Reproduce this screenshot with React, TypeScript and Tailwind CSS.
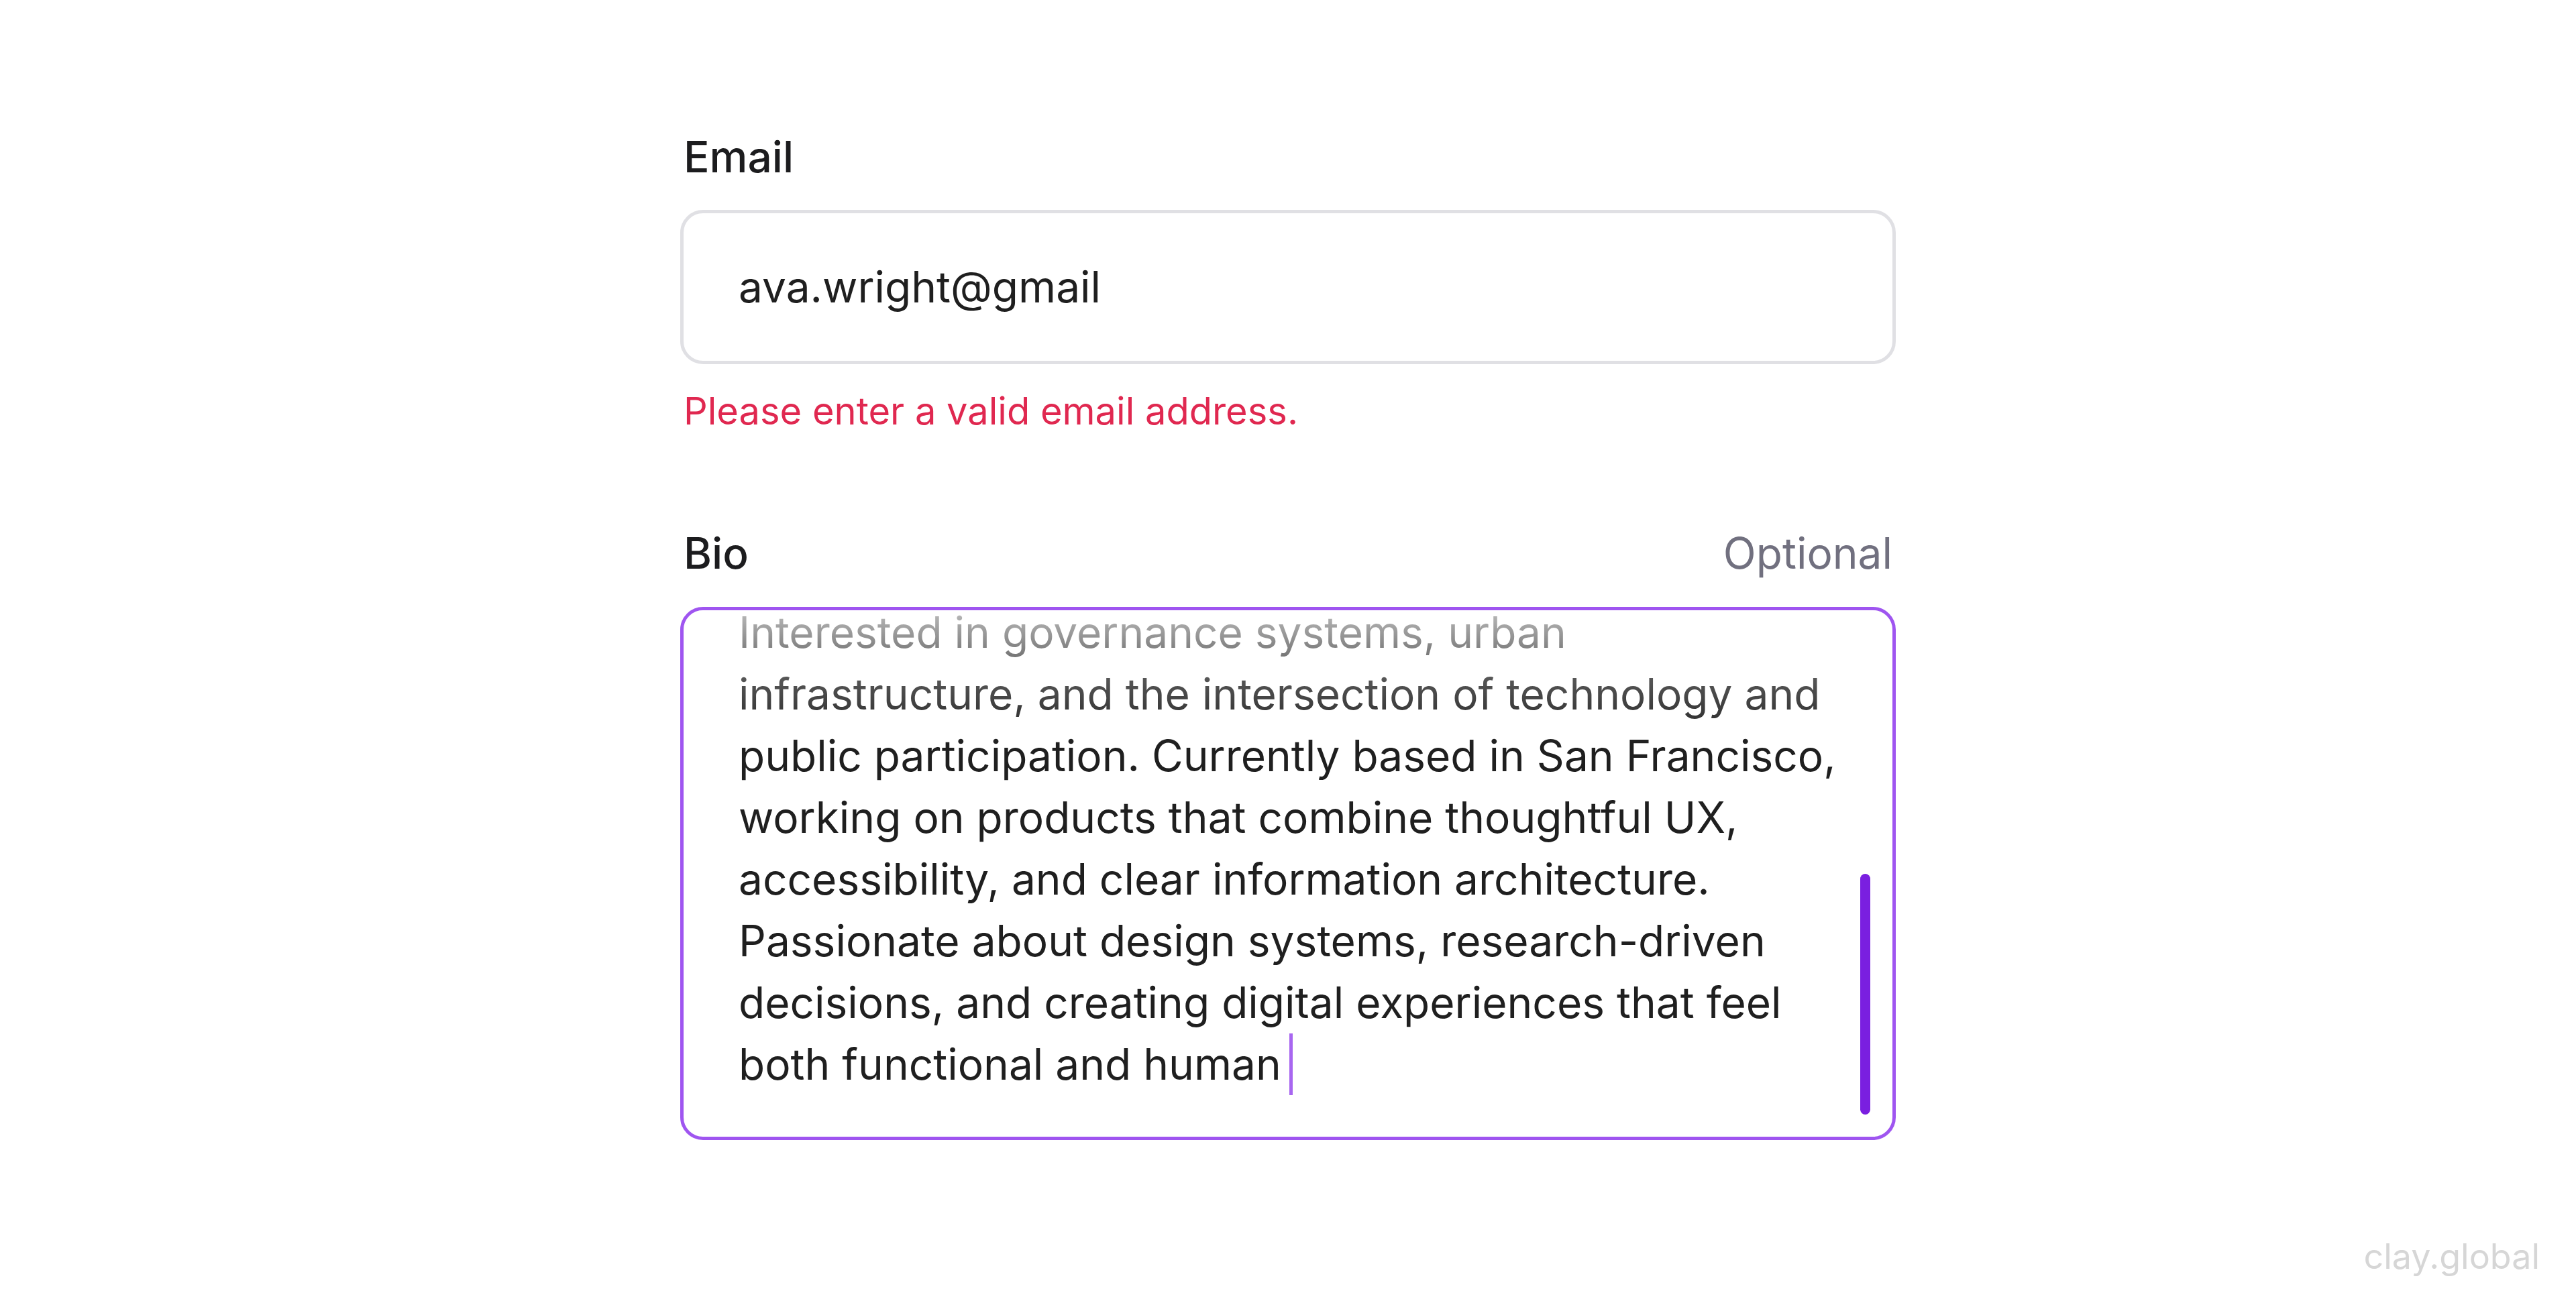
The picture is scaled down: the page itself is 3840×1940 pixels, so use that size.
import React from "react";

const lines = [
  "Interested in governance systems, urban",
  "infrastructure, and the intersection of technology and",
  "public participation. Currently based in San Francisco,",
  "working on products that combine thoughtful UX,",
  "accessibility, and clear information architecture.",
  "Passionate about design systems, research-driven",
  "decisions, and creating digital experiences that feel",
];

export default function App() {
  return (
    <div
      className="relative w-full h-[1940px] bg-white overflow-hidden"
      style={{ fontFamily: "Inter, 'Noto Sans', sans-serif" }}
    >
      <div className="mx-auto w-[1812px] pt-[202px] flex flex-col">
        {/* Email */}
        <label className="pl-[5px] text-[64px] leading-[64px] font-medium text-[#1c1c1e]">Email</label>
        <div className="mt-[47px] h-[230px] rounded-[34px] border-[5px] border-[#e0e0e4] bg-white flex items-center pl-[82px]">
          <span className="text-[64px] leading-[64px] text-[#1f1f1f]">ava.wright@gmail</span>
        </div>
        <p className="mt-[42px] pl-[5px] text-[56px] leading-[56px] text-[#e02850]">
          Please enter a valid email address.
        </p>

        {/* Bio */}
        <div className="mt-[152px] flex items-baseline justify-between pl-[5px] pr-[5px]">
          <label className="text-[64px] leading-[64px] font-medium text-[#1c1c1e]">Bio</label>
          <span className="text-[64px] leading-[64px] text-[#71707f]">Optional</span>
        </div>
        <div className="relative mt-[48px] h-[795px] rounded-[34px] border-[5px] border-[#9f55f0] bg-white overflow-hidden">
          <div className="-mt-[13px] pl-[82px] text-[64px] leading-[92px] text-[#1f1f1f]">
            {lines.map((l) => (
              <div key={l} className="whitespace-nowrap">
                {l}
              </div>
            ))}
            <div className="whitespace-nowrap">
              both functional and human
              <span className="inline-block align-top ml-[12px] w-[5px] h-[92px] bg-[#a866f0]" />
            </div>
          </div>
          <div className="pointer-events-none absolute left-0 right-0 top-0 h-[200px] bg-gradient-to-b from-white/70 via-white/25 to-transparent" />
          <div className="absolute right-[33px] bottom-[33px] w-[15px] h-[359px] rounded-full bg-[#7a1fe0]" />
        </div>
      </div>

      <div className="absolute right-[54px] bottom-[40px] text-[52px] leading-[52px] text-[#d6d6d6]">
        clay.global
      </div>
    </div>
  );
}
